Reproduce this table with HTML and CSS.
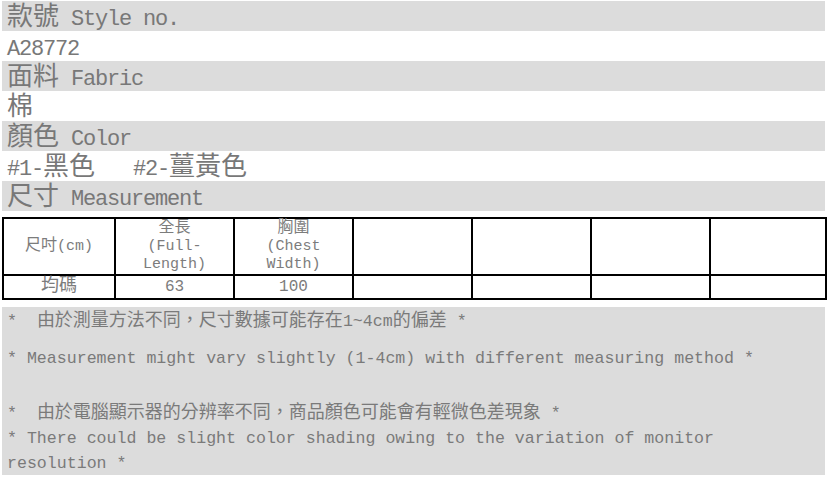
FILE: index.html
```html
<!DOCTYPE html>
<html lang="zh-Hant">
<head>
<meta charset="utf-8">
<title>款號 A28772</title>
<link rel="stylesheet" href="styles.css">
</head>
<body>
<div class="sheet">
  <div class="row shade"><span class="zh">款號</span> Style no.</div>
  <div class="row">A28772</div>
  <div class="row shade"><span class="zh">面料</span> Fabric</div>
  <div class="row"><span class="zh">棉</span></div>
  <div class="row shade"><span class="zh">顏色</span> Color</div>
  <div class="row">#1-<span class="zh">黑色　</span> #2-<span class="zh">薑黃色</span></div>
  <div class="row shade"><span class="zh">尺寸</span> Measurement</div>

  <table class="size">
    <colgroup>
      <col class="c-first">
      <col class="c-mid">
      <col class="c-mid">
      <col class="c-mid">
      <col class="c-mid">
      <col class="c-mid">
      <col class="c-last">
    </colgroup>
    <tr class="head">
      <td><span class="tzh">尺吋</span>(cm)</td>
      <td><span class="tzh">全長</span><br>(Full-<br>Length)</td>
      <td><span class="tzh">胸圍</span><br>(Chest<br>Width)</td>
      <td></td><td></td><td></td><td></td>
    </tr>
    <tr class="body">
      <td><span class="tzh">均碼</span></td>
      <td>63</td>
      <td>100</td>
      <td></td><td></td><td></td><td></td>
    </tr>
  </table>

  <div class="notes">
    <p class="n1">*&nbsp; <span class="nzh">由於測量方法不同，尺寸數據可能存在</span>1~4cm<span class="nzh">的偏差</span> *</p>
    <p class="n2">* Measurement might vary slightly (1-4cm) with different measuring method *</p>
    <p class="n3">*&nbsp; <span class="nzh">由於電腦顯示器的分辨率不同，商品顏色可能會有輕微色差現象</span> *</p>
    <p class="n4">* There could be slight color shading owing to the variation of monitor resolution *</p>
  </div>
</div>
</body>
</html>
```

FILE: styles.css
```css
html, body {
  margin: 0;
  padding: 0;
  background: #ffffff;
}

body {
  padding: 1px 0 0 2px;
  font-family: "Liberation Mono", "Noto Sans CJK TC", monospace;
  color: #787878;
}

.sheet {
  width: 823px;
}

.row {
  box-sizing: border-box;
  height: 30px;
  padding: 7px 0 0 5px;
  line-height: 23px;
  font-size: 22px;
  letter-spacing: -1.2px;
  white-space: nowrap;
}

.row.shade {
  background: #dcdcdc;
}

.zh {
  font-family: "Noto Sans CJK TC", sans-serif;
  font-size: 26px;
  line-height: 11px;
  letter-spacing: 0;
}

.size {
  margin-top: 6px;
  width: 823px;
  table-layout: fixed;
  border-collapse: collapse;
  border: 2px solid #000;
}

.c-first { width: 112px; }
.c-mid { width: 119px; }
.c-last { width: 116px; }

.size td {
  border: 2px solid #000;
  padding: 0;
  text-align: center;
  vertical-align: middle;
  font-size: 15px;
  line-height: 18px;
  color: #7c7c7c;
}

.size tr.head { height: 50px; }
.size tr.body { height: 24px; }

.size tr.body td {
  font-size: 16px;
  line-height: 21px;
  padding-top: 1px;
}

.tzh {
  font-family: "Noto Sans CJK TC", sans-serif;
  font-size: 16px;
  line-height: 12px;
}

.size tr.body .tzh {
  font-size: 18px;
  line-height: 12px;
}

.notes {
  margin-top: 7px;
  background: #dcdcdc;
  padding: 2px 12px 0 5px;
  height: 166px;
  font-size: 16.6px;
  line-height: 25px;
  color: #7a7a7a;
}

.nzh {
  font-family: "Noto Sans CJK TC", sans-serif;
  font-size: 18px;
  line-height: 14px;
}

.notes p {
  margin: 0;
}

.notes .n2 { margin-top: 12px; }
.notes .n3 { margin-top: 30px; }
.notes .n4 { margin-top: 0; }
```
